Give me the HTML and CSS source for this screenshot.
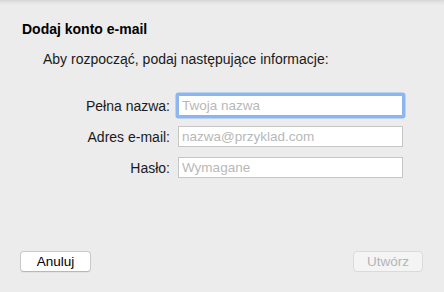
FILE: index.html
```html
<!DOCTYPE html>
<html lang="pl">
<head>
    <meta charset="UTF-8">
    <meta name="viewport" content="width=device-width, initial-scale=1.0">
    <title>Dodaj konto e-mail</title>
    <link rel="stylesheet" href="styles.css">
</head>
<body>
    <div class="sheet">
        <h1>Dodaj konto e-mail</h1>
        <p class="intro">Aby rozpocząć, podaj następujące informacje:</p>

        <div class="fields">
            <label for="name">Pełna nazwa:</label>
            <input id="name" class="focused" type="text" placeholder="Twoja nazwa">
            <label for="email">Adres e-mail:</label>
            <input id="email" type="text" placeholder="nazwa@przyklad.com">
            <label for="password">Hasło:</label>
            <input id="password" type="password" placeholder="Wymagane">
        </div>

        <div class="actions">
            <button class="btn">Anuluj</button>
            <button class="btn" disabled>Utwórz</button>
        </div>
    </div>
</body>
</html>
```

FILE: styles.css
```css
/* Reset */
* {
    margin: 0;
    padding: 0;
    box-sizing: border-box;
}

body {
    font-family: "Liberation Sans", Arial, sans-serif;
    font-size: 14px;
    color: #1a1a1a;
    background-color: #ececec;
    height: 292px;
    overflow: hidden;
}

/* Sheet with shadow from the title bar */
.sheet {
    height: 100%;
    display: flex;
    flex-direction: column;
    background: linear-gradient(#d6d6d6, #e6e6e6 3px, #ececec 6px);
}

.sheet h1 {
    font-size: 14px;
    font-weight: bold;
    line-height: 16px;
    color: #000000;
    margin: 21px 0 0 22px;
}

.intro {
    line-height: 16px;
    margin: 14px 0 0 43px;
}

/* Form */
.fields {
    display: grid;
    grid-template-columns: 170px 225px;
    column-gap: 8px;
    row-gap: 10px;
    align-items: center;
    margin-top: 28px;
}

.fields label {
    text-align: right;
    line-height: 16px;
}

.fields input {
    height: 21px;
    border: 1px solid #c6c6c6;
    background-color: #ffffff;
    font-family: inherit;
    font-size: 13.5px;
    color: #1a1a1a;
    padding: 0 3px;
    outline: none;
}

.fields input::placeholder {
    color: #b8b8b8;
}

.fields input.focused {
    border-color: #8fb4e8;
    border-radius: 1px;
    box-shadow: 0 0 0 2.5px #8cb6f1;
}

/* Buttons */
.actions {
    margin-top: auto;
    display: flex;
    justify-content: space-between;
    padding: 0 21px 20px 20px;
}

.btn {
    width: 71px;
    height: 21px;
    font-family: inherit;
    font-size: 13.5px;
    color: #000000;
    background-color: #ffffff;
    border: 1px solid #c9c9c9;
    border-bottom-color: #b8b8b8;
    border-radius: 4px;
    box-shadow: 0 1px 0 rgba(0, 0, 0, 0.04);
}

.btn:disabled {
    width: 70px;
    color: #b4b4b4;
    background-color: #f4f4f4;
    border-color: #dadada;
    box-shadow: none;
}
```
